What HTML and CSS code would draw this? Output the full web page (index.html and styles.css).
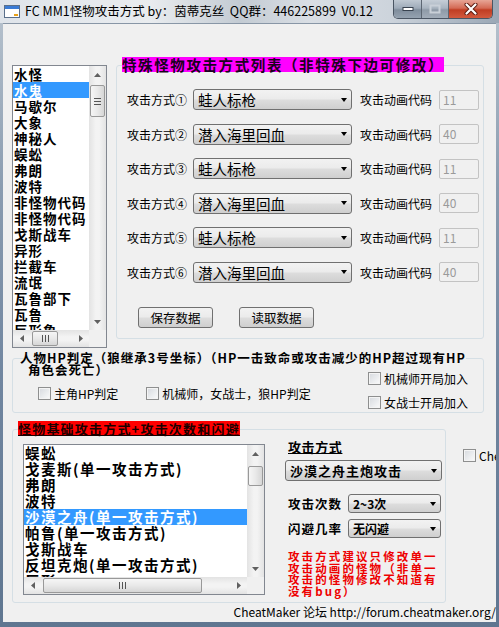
FILE: index.html
```html
<!DOCTYPE html>
<html lang="zh-CN">
<head>
    <meta charset="UTF-8">
    <title>FC MM1怪物攻击方式</title>
    <link rel="stylesheet" href="styles.css">
</head>
<body>
<div class="window">
    <div class="titlebar">
        <svg class="app-icon" width="16" height="13" viewBox="0 0 16 13">
            <rect x="0.5" y="0.5" width="15" height="12" fill="#fff" stroke="#5a6f8a"/>
            <rect x="1" y="1" width="14" height="3" fill="#3a7bd5"/>
            <rect x="10" y="9" width="4" height="2" fill="#e9a21a"/>
        </svg>
        <div class="title-text">FC MM1怪物攻击方式 by：茵蒂克丝&nbsp; QQ群：446225899&nbsp; V0.12</div>
        <div class="caption-buttons">
            <div class="cap-btn cap-min">
                <svg width="12" height="6" viewBox="0 0 12 6"><rect x="1" y="1.5" width="10" height="3" fill="#fff" stroke="#38424f"/></svg>
            </div>
            <div class="cap-btn cap-max">
                <svg width="12" height="10" viewBox="0 0 12 10"><rect x="1.5" y="1.5" width="9" height="7" fill="none" stroke="#c9d0d8" stroke-width="2"/></svg>
            </div>
            <div class="cap-btn cap-close">
                <svg width="14" height="12" viewBox="0 0 14 12">
                    <path d="M2.5 1.5 L11.5 10.5 M11.5 1.5 L2.5 10.5" stroke="#5a1a10" stroke-width="4" stroke-linecap="round"/>
                    <path d="M2.5 1.5 L11.5 10.5 M11.5 1.5 L2.5 10.5" stroke="#fff" stroke-width="2.2" stroke-linecap="round"/>
                </svg>
            </div>
        </div>
    </div>

    <div class="client">
        <div class="top-row">
            <div class="listbox monster-list">
                <div class="list-main">
                    <ul class="items">
                        <li>水怪</li>
                        <li class="selected">水鬼</li>
                        <li>马歇尔</li>
                        <li>大象</li>
                        <li>神秘人</li>
                        <li>蜈蚣</li>
                        <li>弗朗</li>
                        <li>波特</li>
                        <li>非怪物代码</li>
                        <li>非怪物代码</li>
                        <li>戈斯战车</li>
                        <li>异形</li>
                        <li>拦截车</li>
                        <li>流氓</li>
                        <li>瓦鲁部下</li>
                        <li>瓦鲁</li>
                        <li>巨形象</li>
                    </ul>
                    <div class="vscroll">
                        <div class="sb-arrow"><svg width="7" height="4" viewBox="0 0 7 4"><path d="M0 4 L3.5 0 L7 4Z" fill="#606060"/></svg></div>
                        <div class="vthumb thumb-short"><span class="grip-h"></span></div>
                        <div class="sb-fill"></div>
                        <div class="sb-arrow"><svg width="7" height="4" viewBox="0 0 7 4"><path d="M0 0 L3.5 4 L7 0Z" fill="#606060"/></svg></div>
                    </div>
                </div>
                <div class="hscroll-row">
                    <div class="hscroll">
                        <div class="sb-arrow-h"><svg width="4" height="7" viewBox="0 0 4 7"><path d="M4 0 L0 3.5 L4 7Z" fill="#606060"/></svg></div>
                        <div class="hthumb thumb-small"><span class="grip-v"></span></div>
                        <div class="sb-fill"></div>
                        <div class="sb-arrow-h"><svg width="4" height="7" viewBox="0 0 4 7"><path d="M0 0 L4 3.5 L0 7Z" fill="#606060"/></svg></div>
                    </div>
                    <div class="sb-corner"></div>
                </div>
            </div>

            <div class="group special-group">
                <div class="group-title title-magenta">特殊怪物攻击方式列表（非特殊下边可修改）</div>
                <div class="attack-rows">
                    <div class="attack-row">
                        <span class="row-label">攻击方式①</span>
                        <div class="combo"><span>蛙人标枪</span><i class="combo-arrow"></i></div>
                        <span class="code-label">攻击动画代码</span>
                        <div class="textbox">11</div>
                    </div>
                    <div class="attack-row">
                        <span class="row-label">攻击方式②</span>
                        <div class="combo"><span>潜入海里回血</span><i class="combo-arrow"></i></div>
                        <span class="code-label">攻击动画代码</span>
                        <div class="textbox">40</div>
                    </div>
                    <div class="attack-row">
                        <span class="row-label">攻击方式③</span>
                        <div class="combo"><span>蛙人标枪</span><i class="combo-arrow"></i></div>
                        <span class="code-label">攻击动画代码</span>
                        <div class="textbox">11</div>
                    </div>
                    <div class="attack-row">
                        <span class="row-label">攻击方式④</span>
                        <div class="combo"><span>潜入海里回血</span><i class="combo-arrow"></i></div>
                        <span class="code-label">攻击动画代码</span>
                        <div class="textbox">40</div>
                    </div>
                    <div class="attack-row">
                        <span class="row-label">攻击方式⑤</span>
                        <div class="combo"><span>蛙人标枪</span><i class="combo-arrow"></i></div>
                        <span class="code-label">攻击动画代码</span>
                        <div class="textbox">11</div>
                    </div>
                    <div class="attack-row">
                        <span class="row-label">攻击方式⑥</span>
                        <div class="combo"><span>潜入海里回血</span><i class="combo-arrow"></i></div>
                        <span class="code-label">攻击动画代码</span>
                        <div class="textbox">40</div>
                    </div>
                </div>
                <div class="button-row">
                    <button class="win-btn">保存数据</button>
                    <button class="win-btn">读取数据</button>
                </div>
            </div>
        </div>

        <div class="group hp-group">
            <div class="group-title hp-title">人物HP判定（狼继承3号坐标）（HP一击致命或攻击减少的HP超过现有HP<br>角色会死亡）</div>
            <div class="hp-body">
                <div class="hp-left">
                    <label class="check"><span class="box"></span>主角HP判定</label>
                    <label class="check"><span class="box"></span>机械师，女战士，狼HP判定</label>
                </div>
                <div class="hp-right">
                    <label class="check"><span class="box"></span>机械师开局加入</label>
                    <label class="check"><span class="box"></span>女战士开局加入</label>
                </div>
            </div>
        </div>

        <div class="bottom-row">
            <div class="group base-group">
                <div class="group-title title-red">怪物基础攻击方式+攻击次数和闪避</div>
                <div class="base-body">
                    <div class="listbox base-list">
                        <div class="list-main">
                            <ul class="items">
                                <li>蜈蚣</li>
                                <li>戈麦斯(单一攻击方式)</li>
                                <li>弗朗</li>
                                <li>波特</li>
                                <li class="selected">沙漠之舟(单一攻击方式)</li>
                                <li>帕鲁(单一攻击方式)</li>
                                <li>戈斯战车</li>
                                <li>反坦克炮(单一攻击方式)</li>
                                <li>巨形</li>
                            </ul>
                            <div class="vscroll">
                                <div class="sb-arrow"><svg width="7" height="4" viewBox="0 0 7 4"><path d="M0 4 L3.5 0 L7 4Z" fill="#606060"/></svg></div>
                                <div class="vthumb thumb-tiny"></div>
                                <div class="sb-fill"></div>
                                <div class="sb-arrow"><svg width="7" height="4" viewBox="0 0 7 4"><path d="M0 0 L3.5 4 L7 0Z" fill="#606060"/></svg></div>
                            </div>
                        </div>
                        <div class="hscroll-row">
                            <div class="hscroll">
                                <div class="sb-arrow-h"><svg width="4" height="7" viewBox="0 0 4 7"><path d="M4 0 L0 3.5 L4 7Z" fill="#606060"/></svg></div>
                                <div class="hthumb thumb-wide"><span class="grip-v"></span></div>
                                <div class="sb-fill"></div>
                                <div class="sb-arrow-h"><svg width="4" height="7" viewBox="0 0 4 7"><path d="M0 0 L4 3.5 L0 7Z" fill="#606060"/></svg></div>
                            </div>
                            <div class="sb-corner"></div>
                        </div>
                    </div>

                    <div class="base-side">
                        <div class="side-heading">攻击方式</div>
                        <div class="combo combo-bold combo-full"><span>沙漠之舟主炮攻击</span><i class="combo-arrow"></i></div>
                        <div class="side-row first">
                            <span class="side-label">攻击次数</span>
                            <div class="combo combo-small"><span>2~3次</span><i class="combo-arrow"></i></div>
                        </div>
                        <div class="side-row">
                            <span class="side-label">闪避几率</span>
                            <div class="combo combo-small"><span>无闪避</span><i class="combo-arrow"></i></div>
                        </div>
                        <p class="warning">攻击方式建议只修改单一<br>攻击动画的怪物（非单一<br>攻击的怪物修改不知道有<br>没有bug）</p>
                    </div>
                </div>
            </div>
            <label class="check che-check"><span class="box"></span>CheatMaker</label>
        </div>

        <div class="footer">CheatMaker 论坛 http://forum.cheatmaker.org/</div>
    </div>
</div>
</body>
</html>
```

FILE: styles.css
```css
* {
    box-sizing: border-box;
}

body {
    margin: 0;
    width: 499px;
    height: 627px;
    overflow: hidden;
    font-family: "Noto Sans CJK SC", "Liberation Sans", sans-serif;
    font-size: 12px;
    color: #000;
    background: #6d8198;
}

.window {
    width: 499px;
    height: 627px;
    display: flex;
    flex-direction: column;
    background: linear-gradient(180deg, #b9c4cf 0%, #8a9cb0 30%, #7186a0 60%, #5f7690 100%);
}

/* title bar */
.titlebar {
    height: 23px;
    display: flex;
    align-items: flex-start;
    background: linear-gradient(90deg, #dfe4ea 0%, #e9ecef 30%, #c3cbd3 48%, #d9dee4 62%, #cdd4dc 78%, #9aa7b5 100%);
}

.app-icon {
    margin: 5px 0 0 4px;
    flex: none;
}

.title-text {
    margin-left: 5px;
    line-height: 22px;
    font-size: 12.5px;
    white-space: nowrap;
    color: #000;
}

.caption-buttons {
    margin-left: auto;
    margin-right: 6px;
    display: flex;
    height: 19px;
    border: 1px solid #4a5563;
    border-top: none;
    border-radius: 0 0 5px 5px;
    overflow: hidden;
}

.cap-btn {
    height: 18px;
    display: flex;
    align-items: center;
    justify-content: center;
}

.cap-min {
    width: 28px;
    border-right: 1px solid #5c6672;
    background: linear-gradient(180deg, #bfc8d2 0%, #9eabb9 45%, #7f8d9c 55%, #95a2b0 100%);
}

.cap-max {
    width: 27px;
    border-right: 1px solid #5c6672;
    background: linear-gradient(180deg, #c6ced7 0%, #a9b4c0 45%, #8e9aa7 55%, #a2adb9 100%);
}

.cap-close {
    width: 43px;
    background: linear-gradient(180deg, #e7a596 0%, #d46a55 45%, #c03d23 55%, #d25a3e 100%);
}

/* client area */
.client {
    flex: 1;
    margin: 0 3px 5px 3px;
    padding: 34px 0 0 9px;
    background: #f0f0f0;
    overflow: hidden;
    border-top: 1px solid #8896a6;
}

.top-row {
    display: flex;
    gap: 9px;
    margin-top: -1px;
}

/* group boxes */
.group {
    border: 1px solid #d5dfe5;
    border-radius: 3px;
}

.group-title {
    width: fit-content;
    font-weight: bold;
    font-size: 14px;
    white-space: nowrap;
}

.title-magenta {
    margin: -9px 0 0 5px;
    background: #ff00ff;
    font-size: 14.5px;
    letter-spacing: 1.6px;
    line-height: 15px;
    height: 15px;
    color: #1a0020;
}

.special-group {
    width: 368px;
    height: 274px;
    margin-top: 8px;
}

.attack-rows {
    display: flex;
    flex-direction: column;
    gap: 13.6px;
    margin-top: 17px;
}

.attack-row {
    display: flex;
    align-items: center;
    height: 21px;
    padding-left: 10px;
}

.row-label {
    width: 66px;
    font-size: 12px;
    white-space: nowrap;
}

.code-label {
    width: 79px;
    margin-left: 8px;
    font-size: 12px;
    white-space: nowrap;
}

.combo {
    display: flex;
    align-items: center;
    width: 159px;
    height: 21px;
    padding-left: 4px;
    border: 1px solid #707070;
    border-radius: 3px;
    background: linear-gradient(180deg, #f2f2f2 0%, #ebebeb 48%, #dddddd 52%, #cfcfcf 100%);
    font-size: 14.5px;
    white-space: nowrap;
}

.combo-arrow {
    margin-left: auto;
    margin-right: 4px;
    width: 0;
    height: 0;
    border-left: 3.5px solid transparent;
    border-right: 3.5px solid transparent;
    border-top: 4px solid #000;
}

.textbox {
    width: 40px;
    height: 20px;
    padding-left: 3px;
    border: 1px solid #c3c3c3;
    border-radius: 2px;
    background: #f0f0f0;
    color: #9a9a9a;
    font-size: 12px;
    line-height: 18px;
}

.button-row {
    display: flex;
    gap: 26px;
    padding-left: 21px;
    margin-top: 24px;
}

.win-btn {
    width: 75px;
    height: 21px;
    padding: 0;
    border: 1px solid #707070;
    border-radius: 3px;
    background: linear-gradient(180deg, #f2f2f2 0%, #ebebeb 48%, #dddddd 52%, #cfcfcf 100%);
    font-family: "Noto Sans CJK SC", sans-serif;
    font-size: 12.5px;
    color: #000;
}

/* list boxes */
.listbox {
    flex: none;
    display: flex;
    flex-direction: column;
    border: 1px solid #828790;
    background: #fff;
}

.monster-list {
    width: 95px;
    height: 283px;
    margin-top: 8px;
}

.list-main {
    flex: 1;
    display: flex;
    min-height: 0;
}

.items {
    flex: 1;
    margin: 0;
    padding: 0;
    list-style: none;
    overflow: hidden;
}

.items li {
    height: 16px;
    line-height: 16px;
    padding-left: 1px;
    font-weight: bold;
    font-size: 13.5px;
    letter-spacing: 1px;
    white-space: nowrap;
}

.items li.selected {
    background: #3399ff;
    color: #fff;
}

.vscroll {
    width: 17px;
    display: flex;
    flex-direction: column;
    background: linear-gradient(90deg, #e3e3e3, #f3f3f3 40%, #f3f3f3 60%, #e3e3e3);
}

.sb-arrow {
    height: 17px;
    display: flex;
    align-items: center;
    justify-content: center;
}

.sb-fill {
    flex: 1;
}

.vthumb {
    margin: 2px 1px 0 1px;
    border: 1px solid #999;
    border-radius: 2px;
    background: linear-gradient(90deg, #f6f6f6 0%, #e9e9e9 50%, #d6d6d6 100%);
    display: flex;
    align-items: center;
    justify-content: center;
}

.thumb-short {
    height: 32px;
}

.thumb-tiny {
    height: 20px;
    margin-top: 4px;
}

.grip-h {
    width: 7px;
    height: 7px;
    border-top: 1px solid #555;
    border-bottom: 1px solid #555;
    background: linear-gradient(180deg, transparent 2px, #555 2px, #555 3px, transparent 3px);
}

.hscroll-row {
    height: 17px;
    display: flex;
}

.hscroll {
    flex: 1;
    display: flex;
    background: linear-gradient(180deg, #e3e3e3, #f3f3f3 40%, #f3f3f3 60%, #e3e3e3);
}

.sb-arrow-h {
    width: 17px;
    display: flex;
    align-items: center;
    justify-content: center;
}

.hthumb {
    margin: 1px 0 1px 2px;
    border: 1px solid #999;
    border-radius: 2px;
    background: linear-gradient(180deg, #f6f6f6 0%, #e9e9e9 50%, #d6d6d6 100%);
    display: flex;
    align-items: center;
    justify-content: center;
}

.thumb-small {
    width: 26px;
}

.thumb-wide {
    width: 159px;
}

.grip-v {
    width: 7px;
    height: 7px;
    border-left: 1px solid #555;
    border-right: 1px solid #555;
    background: linear-gradient(90deg, transparent 2px, #555 2px, #555 3px, transparent 3px);
}

.sb-corner {
    width: 17px;
    background: #f0f0f0;
}

/* HP group */
.hp-group {
    width: 472px;
    margin-top: 10px;
}

.hp-title {
    margin: -7px 0 0 15px;
    text-indent: -8px;
    font-size: 12.5px;
    letter-spacing: 1px;
    line-height: 12px;
    background: #f0f0f0;
    color: #000;
}

.hp-body {
    display: flex;
    align-items: flex-start;
    padding-bottom: 3px;
}

.hp-left {
    width: 355px;
    display: flex;
    gap: 28px;
    padding-left: 25px;
    margin-top: 11px;
}

.hp-right {
    display: flex;
    flex-direction: column;
    gap: 11px;
    margin-top: -4px;
}

.check {
    display: flex;
    align-items: center;
    gap: 3px;
    height: 13px;
    font-size: 12px;
    white-space: nowrap;
}

.box {
    flex: none;
    width: 13px;
    height: 13px;
    border: 1px solid #8e8f8f;
    background: linear-gradient(135deg, #d6d9de 0%, #eceef0 60%, #fbfbfb 100%);
    box-shadow: inset 0 0 0 1px #f4f4f4;
}

/* base attack group */
.bottom-row {
    display: flex;
    align-items: flex-start;
    margin-top: 16px;
}

.base-group {
    width: 434px;
    height: 174px;
    flex: none;
}

.title-red {
    margin: -9px 0 0 5px;
    height: 15px;
    line-height: 15px;
    background: #ff0000;
    color: #1a0000;
    text-decoration: underline;
    font-size: 13px;
    letter-spacing: 1.2px;
}

.base-body {
    display: flex;
    align-items: flex-start;
}

.base-list {
    width: 242px;
    height: 151px;
    margin: 8px 0 0 10px;
}

.base-list .items li {
    font-size: 14.5px;
    letter-spacing: 1.5px;
    padding-left: 1px;
}

.base-side {
    width: 157px;
    margin: 3px 0 0 20px;
}

.side-heading {
    padding-left: 3px;
    font-weight: bold;
    font-size: 13px;
    letter-spacing: 0.6px;
    line-height: 15px;
    text-decoration: underline;
}

.combo-full {
    width: 157px;
    margin-top: 6px;
}

.combo-bold {
    font-weight: bold;
    font-size: 13px;
    letter-spacing: 1px;
}

.side-row {
    display: flex;
    align-items: center;
    margin-top: 6px;
}

.side-row.first {
    margin-top: 13px;
}

.side-label {
    width: 63px;
    padding-left: 3px;
    font-weight: bold;
    font-size: 12.5px;
    letter-spacing: 1px;
}

.combo-small {
    width: 93px;
    height: 19px;
    font-weight: bold;
    font-size: 12px;
}

.warning {
    margin: 13px 0 0 0;
    padding-left: 3px;
    color: #ee0000;
    font-weight: bold;
    font-size: 11.5px;
    letter-spacing: 2.1px;
    line-height: 11.7px;
    white-space: nowrap;
}

.che-check {
    margin: 20px 0 0 17px;
}

.footer {
    margin-top: 1px;
    text-align: right;
    font-size: 12px;
    line-height: 16px;
    white-space: nowrap;
}
```
